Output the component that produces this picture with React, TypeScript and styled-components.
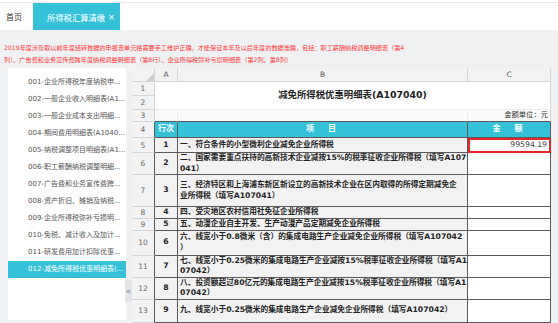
import React from "react";
import styled, { createGlobalStyle } from "styled-components";

const GlobalStyle = createGlobalStyle`
  html, body {
    margin: 0;
    padding: 0;
    background: #f0f1f3;
  }
  body {
    font-family: "DejaVu Sans", "Noto Sans CJK SC", sans-serif;
  }
`;

const CYAN = "#35c2d9";
const DARK = "#5a5a5a";
const LIGHT = "#d6d6d6";

const Page = styled.div`
  width: 558px;
  height: 323px;
  overflow: hidden;
  background: #f0f1f3;
  display: flex;
  flex-direction: column;
`;

const TopBar = styled.div`
  background: #fff;
  padding-top: 2px;
`;

const TabRow = styled.div`
  display: flex;
  height: 27px;
  border-top: 1px solid #ececec;
`;

const HomeTab = styled.div`
  width: 27px;
  padding-left: 6px;
  display: flex;
  align-items: center;
  font-size: 8px;
  color: #333;
`;

const ActiveTab = styled.div`
  width: 73px;
  padding-left: 14px;
  display: flex;
  align-items: center;
  gap: 3px;
  background: ${CYAN};
  color: #fff;
  font-size: 8.3px;
`;

const Notice = styled.div`
  padding: 12px 4px 0;
  font-size: 6.15px;
  line-height: 12px;
  color: #ff3a3a;
  white-space: nowrap;
`;

const Body = styled.div`
  display: flex;
  padding-left: 8px;
  margin-top: 2px;
  flex: 1;
  min-height: 0;
`;

const SidePanel = styled.div`
  width: 118px;
  height: 252px;
  padding-top: 6px;
  box-sizing: border-box;
  background: #fff;
  display: flex;
  flex-direction: column;
`;

const NavItem = styled.div<{ $active?: boolean }>`
  height: 17px;
  line-height: 17px;
  padding-left: 20px;
  font-size: 7px;
  white-space: nowrap;
  overflow: hidden;
  color: ${(p) => (p.$active ? "#fff" : "#555")};
  background: ${(p) => (p.$active ? CYAN : "transparent")};
`;

const CollapseStrip = styled.div`
  width: 6px;
  display: flex;
  flex-direction: column;
  justify-content: flex-end;
  padding-bottom: 21px;
`;

const CollapseButton = styled.div`
  width: 7px;
  margin-left: -1px;
  height: 22px;
  background: #e3e5e9;
  color: #8a8a8a;
  font-size: 9px;
  display: flex;
  align-items: center;
  justify-content: center;
`;

const Sheet = styled.div`
  width: 419px;
  overflow: hidden;
  background: #fff;
`;

const Grid = styled.table`
  width: 419px;
  table-layout: fixed;
  border-collapse: separate;
  border-spacing: 0;
`;

const Row = styled.tr<{ $h: number }>`
  height: ${(p) => p.$h}px;
`;

const RowNum = styled.td<{ $dark?: boolean }>`
  padding: 0;
  background: #f3f3f3;
  color: #666;
  font-size: 7.5px;
  text-align: center;
  border-bottom: 1px solid ${LIGHT};
  border-right: 1px solid ${(p) => (p.$dark ? DARK : LIGHT)};
`;

const Corner = styled.td`
  padding: 0;
  background: #f3f3f3;
  border-bottom: 1px solid ${LIGHT};
  border-right: 1px solid ${LIGHT};
  text-align: right;
  vertical-align: bottom;
  line-height: 0;
`;

const ColHead = styled.td`
  padding: 0;
  background: #f3f3f3;
  color: #555;
  font-size: 7.5px;
  text-align: center;
  border-bottom: 1px solid ${LIGHT};
  border-right: 1px solid ${LIGHT};
`;

const Cell = styled.td<{
  $align?: "left" | "center" | "right";
  $bottom?: string;
  $right?: string;
  $bg?: string;
  $bold?: boolean;
  $selected?: boolean;
}>`
  padding: 0 2px;
  overflow: hidden;
  white-space: nowrap;
  font-size: 7.7px;
  line-height: 10.5px;
  color: #222;
  font-weight: ${(p) => (p.$bold ? 700 : 400)};
  text-align: ${(p) => p.$align ?? "left"};
  background: ${(p) => p.$bg ?? "#fff"};
  border-bottom: 1px solid ${(p) => p.$bottom ?? DARK};
  border-right: 1px solid ${(p) => p.$right ?? DARK};
  outline: ${(p) => (p.$selected ? "2px solid #e5262b" : "none")};
  outline-offset: -2px;
`;

const Title = styled(Cell)`
  text-align: center;
  font-size: 9.4px;
  font-weight: 700;
  color: #222;
`;

const Unit = styled(Cell)`
  font-size: 7.3px;
  color: #333;
  padding-right: 2px;
`;

const HeadCell = styled(Cell)`
  background: ${CYAN};
  color: #fff;
  font-weight: 700;
  font-size: 8px;
`;

const Spaced = styled.span`
  letter-spacing: 3px;
`;

const Value = styled.span`
  color: #444;
  font-weight: 400;
  padding-right: 1px;
`;

const navItems = [
  "001-企业所得税年度纳税申...",
  "002-一般企业收入明细表(A1...",
  "003-一般企业成本支出明细...",
  "004-期间费用明细表(A1040...",
  "005-纳税调整项目明细表(A1...",
  "006-职工薪酬纳税调整明细...",
  "007-广告费和业务宣传费跨...",
  "008-资产折旧、摊销及纳税...",
  "009-企业所得税弥补亏损明...",
  "010-免税、减计收入及加计...",
  "011-研发费用加计扣除优惠...",
  "012-减免所得税优惠明细表(...",
];

type BodyRow = {
  n?: number;
  idx?: string;
  h: number;
  lines: string[];
  value?: string;
  selected?: boolean;
};

const bodyRows: BodyRow[] = [
  { n: 5, idx: "1", h: 15, lines: ["一、符合条件的小型微利企业减免企业所得税"], value: "99594.19", selected: true },
  { n: 6, idx: "2", h: 22, lines: ["二、国家需要重点扶持的高新技术企业减按15%的税率征收企业所得税（填写A107", "041）"] },
  { n: 7, idx: "3", h: 32, lines: ["三、经济特区和上海浦东新区新设立的高新技术企业在区内取得的所得定期减免企", "业所得税（填写A107041）"] },
  { n: 8, idx: "4", h: 11, lines: ["四、受灾地区农村信用社免征企业所得税"] },
  { n: 9, idx: "5", h: 12, lines: ["五、动漫企业自主开发、生产动漫产品定期减免企业所得税"] },
  { n: 10, idx: "6", h: 25, lines: ["六、线宽小于0.8微米（含）的集成电路生产企业减免企业所得税（填写A107042", "）"] },
  { n: 11, idx: "7", h: 22, lines: ["七、线宽小于0.25微米的集成电路生产企业减按15%税率征收企业所得税（填写A1", "07042）"] },
  { n: 12, idx: "8", h: 20, lines: ["八、投资额超过80亿元的集成电路生产企业减按15%税率征收企业所得税（填写A1", "07042）"] },
  { n: 13, idx: "9", h: 23, lines: ["九、线宽小于0.25微米的集成电路生产企业减免企业所得税（填写A107042）"] },
  { h: 22, lines: [] },
];

export default function App() {
  return (
    <>
      <GlobalStyle />
      <Page>
        <TopBar>
          <TabRow>
            <HomeTab>首页</HomeTab>
            <ActiveTab>
              所得税汇算清缴<span>×</span>
            </ActiveTab>
          </TabRow>
        </TopBar>

        <Notice>
          2019年度涉及取以前年度结转数据的申报表单元格需要手工维护正确，才能保证本年及以后年度的数据准确，包括：职工薪酬纳税调整明细表（第4
          <br />
          列）、广告费和业务宣传费跨年度纳税调整明细表（第8行）、企业所得税弥补亏损明细表（第2列、第8列）
        </Notice>

        <Body>
          <SidePanel>
            {navItems.map((t, i) => (
              <NavItem key={t} $active={i === navItems.length - 1}>
                {t}
              </NavItem>
            ))}
          </SidePanel>

          <CollapseStrip>
            <CollapseButton>«</CollapseButton>
          </CollapseStrip>

          <Sheet>
            <Grid>
              <colgroup>
                <col style={{ width: 23 }} />
                <col style={{ width: 23 }} />
                <col style={{ width: 290 }} />
                <col style={{ width: 83 }} />
              </colgroup>
              <tbody>
                <Row $h={14}>
                  <Corner>
                    <svg width="8" height="8" viewBox="0 0 8 8">
                      <polygon points="8,0 8,8 0,8" fill="#cfcfcf" />
                    </svg>
                  </Corner>
                  <ColHead>A</ColHead>
                  <ColHead>B</ColHead>
                  <ColHead>C</ColHead>
                </Row>
                <Row $h={14}>
                  <RowNum>1</RowNum>
                  <Title colSpan={3} rowSpan={2} $bottom="#ececec" $right={LIGHT}>
                    减免所得税优惠明细表(A107040)
                  </Title>
                </Row>
                <Row $h={14}>
                  <RowNum>2</RowNum>
                </Row>
                <Row $h={12}>
                  <RowNum>3</RowNum>
                  <Cell $right="#ececec" $bg="#fafafa" />
                  <Cell $right="#ececec" $bg="#fafafa" />
                  <Unit $align="right" $right={LIGHT} $bg="#fafafa">
                    金额单位：元
                  </Unit>
                </Row>
                <Row $h={16}>
                  <RowNum $dark>4</RowNum>
                  <HeadCell $align="center">行次</HeadCell>
                  <HeadCell $align="center">
                    <Spaced>项　目</Spaced>
                  </HeadCell>
                  <HeadCell $align="center">
                    <Spaced>金　额</Spaced>
                  </HeadCell>
                </Row>
                {bodyRows.map((r, k) => (
                  <Row key={k} $h={r.h}>
                    <RowNum $dark>{r.n}</RowNum>
                    <Cell $align="center" $bold $bg="#f2f2f2">
                      {r.idx}
                    </Cell>
                    <Cell $bold $bg="#f2f2f2">
                      {r.lines.map((l, i) => (
                        <React.Fragment key={i}>
                          {i > 0 && <br />}
                          {l}
                        </React.Fragment>
                      ))}
                    </Cell>
                    <Cell $align="right" $selected={r.selected}>
                      {r.value && <Value>{r.value}</Value>}
                    </Cell>
                  </Row>
                ))}
              </tbody>
            </Grid>
          </Sheet>
        </Body>
      </Page>
    </>
  );
}
